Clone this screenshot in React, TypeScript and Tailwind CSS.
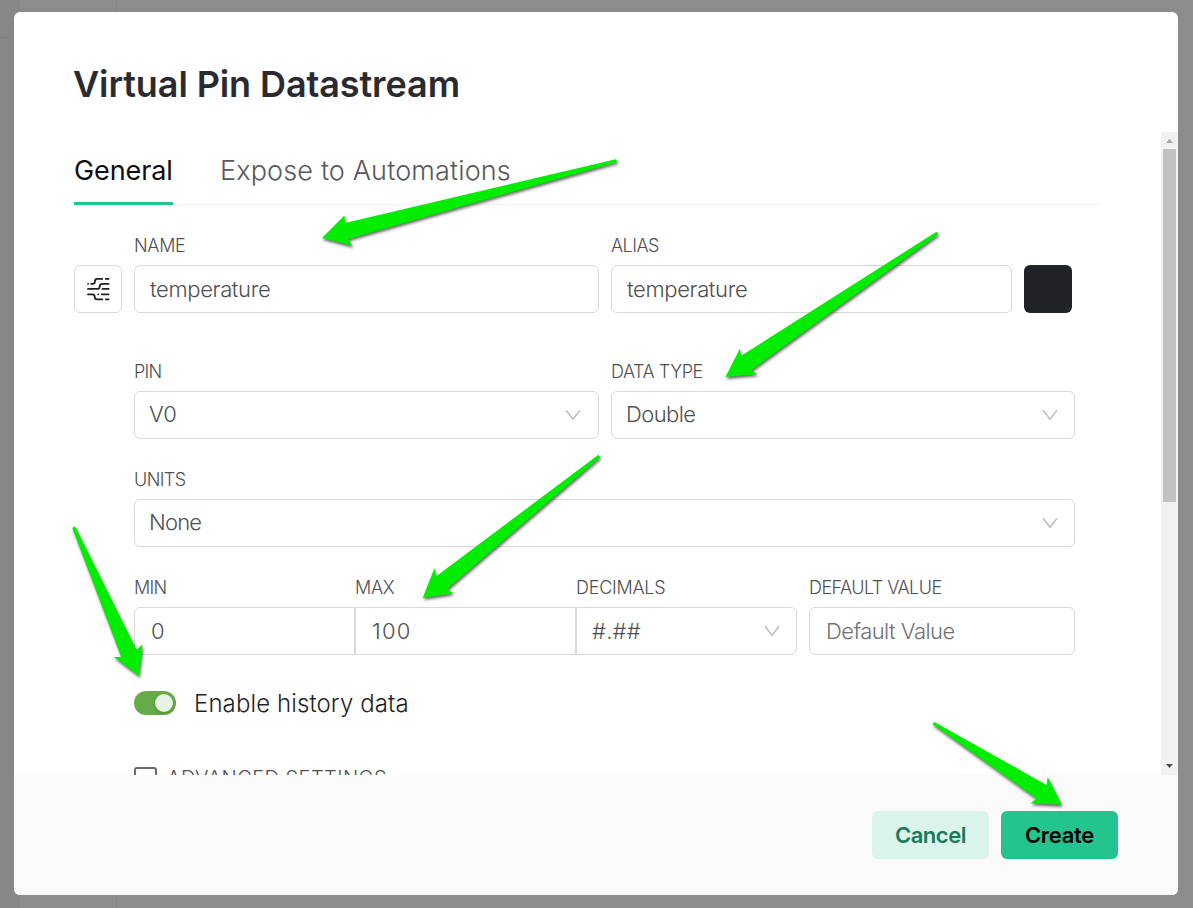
import React from 'react';

const label = 'block h-5 text-[18px] leading-5 font-light text-[#4f4f54] whitespace-nowrap';
const box = 'flex h-12 items-center rounded-[6px] border border-[#d9d9d9] bg-white text-[22px] leading-[30px] font-light text-[#4f4f54]';

function Chevron() {
  return (
    <svg className="ml-auto h-[12px] w-[18px]" viewBox="0 0 18 12" fill="none">
      <path d="M2 1.2 L9 10.2 L16 1.2" stroke="#bfbfbf" strokeWidth="1.6" />
    </svg>
  );
}

function StreamIcon() {
  return (
    <svg className="h-6 w-6" viewBox="86 277 24 24" fill="none" stroke="#1f2026" strokeWidth="1.8" strokeLinecap="round" strokeLinejoin="round">
      <path d="M88 283.8h.1M91.2 283.8h1.3q2.4 0 2.4-2.4q0-2.5 2.5-2.5h4.9M105.8 278.9h2.8" />
      <path d="M88 288.9h9.3q2.4 0 2.4-2.5q0-2.6 2.5-2.6h6.4M102.5 288.9h6.1" />
      <path d="M88 294.3h4.3q2.4 0 2.4 2.5q0 2.6 2.5 2.6h5.1M105.8 299.4h2.8M98.2 294.3h.1M101.8 294.3h6.8" />
    </svg>
  );
}

const arrows = [
  '322,238 344.5,215.5 345,223 616,159.2 617.5,162 348,239.2 352.5,246',
  '725.5,377 740,348.5 741,356 936.5,231.7 938.3,234.5 751,370.5 757.5,374.2',
  '422.7,598 434.5,568.2 436,576.5 598.5,454.7 600.3,457.2 447,589.2 453.5,593.2',
  '139,676 142.5,644.5 136.5,650 75,526.2 72.3,528 121.3,657 113.8,657',
  '1061.7,804.8 1047.7,777 1046.8,785.2 934.3,722 932.5,724.3 1036.7,798.8 1030.3,803.2',
];

export default function App() {
  return (
    <div className="relative flex h-[908px] w-[1193px] overflow-hidden bg-[#8c8c8c] pt-3 pl-[14px] font-['Inter','Liberation_Sans',sans-serif]">
      <div className="absolute inset-y-0 left-0 w-5 bg-[#858789]" />
      <div className="absolute inset-y-0 left-[116px] w-px bg-[#838383]" />
      <div className="absolute top-[37px] left-0 h-px w-2 bg-[#7c7c7e]" />

      <div className="relative flex h-[883px] w-[1164px] flex-col overflow-hidden rounded-[6px] bg-white">
        <header className="h-[120px] shrink-0 pt-[50px] pl-[59px]">
          <h1 className="text-[36px] leading-[44px] font-semibold tracking-[-0.1px] whitespace-nowrap text-[#2a2a30]">Virtual Pin Datastream</h1>
        </header>

        <div className="flex h-[643px] shrink-0 overflow-hidden">
          <main className="w-[1147px] overflow-hidden pl-[60px]">
            <nav className="flex h-[73px] w-[1027px] gap-[47px] border-b border-[#f0f0f0] text-[27px] leading-8 whitespace-nowrap">
              <div className="h-[73px] w-[99px] border-b-[3px] border-[#24c48e] pt-[23px] font-normal tracking-[-0.1px] text-[#0e0e12]">General</div>
              <div className="pt-[23px] font-light tracking-[0.15px] text-[#58585e]">Expose to Automations</div>
            </nav>

            <div className="flex w-[1001px] gap-3 pt-[31px]">
              <button className="mt-[29px] flex h-12 w-12 shrink-0 items-center justify-center rounded-[6px] border border-[#d9d9d9]">
                <StreamIcon />
              </button>
              <div className="w-[465px]">
                <span className={`${label} tracking-[-0.3px]`}>NAME</span>
                <div className={`${box} mt-[9px] px-[15px] tracking-[-0.35px]`}>temperature</div>
              </div>
              <div className="w-[401px]">
                <span className={`${label} tracking-[-0.5px]`}>ALIAS</span>
                <div className={`${box} mt-[9px] px-[15px] tracking-[-0.35px]`}>temperature</div>
              </div>
              <div className="mt-[29px] h-12 w-12 rounded-[6px] bg-[#212228]" />
            </div>

            <div className="ml-[60px] w-[941px]">
              <div className="flex gap-3 pt-[49px]">
                <div className="w-[465px]">
                  <span className={`${label} tracking-[-0.7px]`}>PIN</span>
                  <div className={`${box} mt-[9px] pr-4 pl-[14px] tracking-[-0.3px]`}><span className="pb-[2px]">V0</span><Chevron /></div>
                </div>
                <div className="w-[464px]">
                  <span className={`${label} tracking-[-0.45px]`}>DATA TYPE</span>
                  <div className={`${box} mt-[9px] pr-[15px] pl-[14px] tracking-[-0.6px]`}><span className="pb-[2px]">Double</span><Chevron /></div>
                </div>
              </div>

              <div className="pt-[31px]">
                <span className={`${label} tracking-[-0.6px]`}>UNITS</span>
                <div className={`${box} mt-[9px] pr-[15px] pl-[14px] tracking-[-0.8px]`}><span className="pb-[2px]">None</span><Chevron /></div>
              </div>

              <div className="flex pt-[31px]">
                <div className="w-[221px]">
                  <span className={`${label} tracking-[-0.7px]`}>MIN</span>
                  <div className={`${box} mt-[9px] rounded-r-none pl-4`}>0</div>
                </div>
                <div className="w-[221px]">
                  <span className={`${label} tracking-[-0.3px]`}>MAX</span>
                  <div className={`${box} mt-[9px] rounded-none pl-4 tracking-[1.3px]`}>100</div>
                </div>
                <div className="w-[221px]">
                  <span className={`${label} tracking-[-0.25px]`}>DECIMALS</span>
                  <div className={`${box} mt-[9px] rounded-l-none px-[15px] tracking-[0.2px]`}>#.##<Chevron /></div>
                </div>
                <div className="ml-3 w-[266px]">
                  <span className={`${label} tracking-[-0.55px]`}>DEFAULT VALUE</span>
                  <div className={`${box} mt-[9px] pl-4 tracking-[-0.55px] text-[#707075]`}>Default Value</div>
                </div>
              </div>

              <div className="mt-9 flex h-6 items-center gap-[18px]">
                <div className="flex h-6 w-[42px] items-center justify-end rounded-full bg-[#67ab49] pr-[3px]">
                  <div className="h-[18px] w-[18px] rounded-full bg-[#e7f2e3] shadow-[0_2px_4px_rgba(0,35,11,0.2)]" />
                </div>
                <span className="pt-[2px] text-[24px] leading-8 font-light tracking-[0.1px] whitespace-nowrap text-[#1f1f26]">Enable history data</span>
              </div>

              <div className="flex pt-[52px]">
                <div className="h-6 w-[23px] shrink-0 rounded-[3px] border-2 border-[#69696e]" />
                <span className="-mt-px ml-[10px] text-[20px] leading-6 font-light tracking-[0.45px] whitespace-nowrap text-[#4f4f54]">ADVANCED SETTINGS</span>
              </div>
            </div>
          </main>

          <aside className="flex w-[17px] flex-col items-center bg-[#f1f1f1]">
            <div className="flex h-[17px] shrink-0 items-center">
              <svg className="h-1 w-[7px]" viewBox="0 0 7 4"><path d="M0 4L3.5 0L7 4Z" fill="#a3a3a3" /></svg>
            </div>
            <div className="h-[353px] w-[13px] bg-[#c1c1c1]" />
            <div className="mt-auto flex h-[17px] items-center pb-[2px]">
              <svg className="h-1 w-[7px]" viewBox="0 0 7 4"><path d="M0 0L3.5 4L7 0Z" fill="#505050" /></svg>
            </div>
          </aside>
        </div>

        <footer className="flex flex-1 justify-end gap-3 bg-[#fafafa] pt-9 pr-[60px] text-[22px] font-semibold">
          <button className="h-12 w-[117px] rounded-[6px] bg-[#dbf4eb] tracking-[-0.45px] text-[#19795b]">Cancel</button>
          <button className="h-12 w-[117px] rounded-[6px] bg-[#24c48e] tracking-[-0.3px] text-black">Create</button>
        </footer>
      </div>

      <svg className="pointer-events-none absolute inset-0 h-[908px] w-[1193px] drop-shadow-[1px_2px_1.5px_rgba(0,0,0,0.6)]" viewBox="0 0 1193 908">
        {arrows.map((points) => (
          <polygon key={points} points={points} fill="#00ed00" />
        ))}
      </svg>
    </div>
  );
}
